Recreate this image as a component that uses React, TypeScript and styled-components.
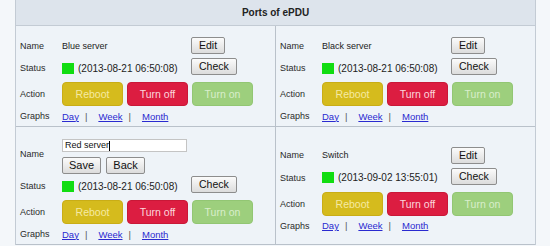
import React from 'react'
import styled, { createGlobalStyle, css } from 'styled-components'

const GlobalStyle = createGlobalStyle`
  body {
    margin: 0;
    background: #f4f7fa;
    font-family: "Liberation Sans", Arial, sans-serif;
  }
`

const Page = styled.div`
  padding-left: 15px;
`

const PortsTable = styled.div`
  width: 521px;
  box-sizing: border-box;
  border-left: 1px solid #c3cbd4;
  border-right: 1px solid #c3cbd4;
  background: #eef3f8;
`

const TableHeading = styled.div`
  height: 26px;
  box-sizing: border-box;
  border-bottom: 1px solid #c3cbd4;
  background: #dde4ec;
  color: #222;
  font-size: 10px;
  font-weight: bold;
  line-height: 25px;
  text-align: center;
`

const PortGrid = styled.div`
  display: grid;
  grid-template-columns: 260px 259px;
`

const PortCell = styled.div<{ $divider: boolean }>`
  display: flex;
  flex-direction: column;
  justify-content: center;
  padding: 11px 0 3px 4px;
  border-bottom: 1px solid #b9c1ca;
  ${(p) => p.$divider && css`border-right: 1px solid #b9c1ca;`}
`

const Row = styled.div<{ $h: number; $mt?: number }>`
  display: flex;
  align-items: center;
  height: ${(p) => p.$h}px;
  margin-top: ${(p) => p.$mt || 0}px;
`

const Label = styled.div<{ $lift?: number }>`
  width: 42px;
  flex: none;
  font-size: 9px;
  color: #2a2a2a;
  margin-bottom: ${(p) => p.$lift || 0}px;
`

const Value = styled.div`
  width: 129px;
  flex: none;
  display: flex;
  align-items: center;
  font-size: 9px;
  color: #222;
`

const EditValue = styled.div`
  width: 129px;
  flex: none;
  display: flex;
  flex-direction: column;
  align-self: flex-start;
`

const Side = styled.div`
  flex: 1;
  align-self: flex-start;
  display: flex;
`

const GrayButton = styled.button<{ $big?: boolean }>`
  height: 17px;
  box-sizing: border-box;
  padding: 0 ${(p) => (p.$big ? 6 : 7)}px;
  margin: 0 ${(p) => (p.$big ? 5 : 0)}px 0 0;
  border: 1px solid #8d8d8d;
  border-radius: 2px;
  background: linear-gradient(#fbfbfb, #dcdcdc);
  color: #111;
  font-family: "Liberation Sans", Arial, sans-serif;
  font-size: ${(p) => (p.$big ? 11 : 10.5)}px;
  line-height: 15px;
  min-width: ${(p) => (p.$big ? 39 : 0)}px;
`

const FakeInput = styled.div`
  width: 119px;
  height: 11px;
  margin-top: 1px;
  box-sizing: content-box;
  border: 1px solid #c4c4c4;
  background: #fff;
  padding: 0 2px;
  font-size: 9px;
  line-height: 11px;
  color: #111;
  display: flex;
  align-items: center;
`

const Caret = styled.span`
  width: 1px;
  height: 10px;
  background: #000;
`

const ButtonPair = styled.div`
  display: flex;
  margin-top: 5px;
`

const StatusLight = styled.span`
  width: 12px;
  height: 11px;
  margin-right: 4px;
  background: #11dd11;
`

const Timestamp = styled.span`
  font-size: 10px;
  color: #222;
  white-space: nowrap;
`

const ActionGroup = styled.div`
  display: flex;
  gap: 4px;
`

const variants = {
  reboot: { bg: '#d5bb1d', border: '#c9ad16', fg: '#f5eaa2' },
  off: { bg: '#dc1d41', border: '#c91837', fg: '#fbd6dd' },
  on: { bg: '#9dcf7d', border: '#92c673', fg: '#d9eecb' },
}

type Variant = keyof typeof variants

const ActionButton = styled.button<{ $variant: Variant }>`
  width: 61px;
  height: 24px;
  box-sizing: border-box;
  border-radius: 4px;
  border: 1px solid ${(p) => variants[p.$variant].border};
  background: ${(p) => variants[p.$variant].bg};
  color: ${(p) => variants[p.$variant].fg};
  font-family: "Liberation Sans", Arial, sans-serif;
  font-size: 10.5px;
  padding: 0;
`

const GraphLink = styled.a`
  font-size: 9.5px;
  color: #2a2ad0;
  text-decoration: underline;
`

const Sep = styled.span`
  font-size: 9.5px;
  color: #555;
  margin: 0 11px 0 6px;
`

type Port = { name: string; time: string; editing?: boolean }

const ports: Port[] = [
  { name: 'Blue server', time: '2013-08-21 06:50:08' },
  { name: 'Black server', time: '2013-08-21 06:50:08' },
  { name: 'Red server', time: '2013-08-21 06:50:08', editing: true },
  { name: 'Switch', time: '2013-09-02 13:55:01' },
]

const PortPanel = ({ port, divider }: { port: Port; divider: boolean }) => (
  <PortCell $divider={divider}>
    {port.editing ? (
      <Row $h={37}>
        <Label $lift={5}>Name</Label>
        <EditValue>
          <FakeInput>
            {port.name}
            <Caret />
          </FakeInput>
          <ButtonPair>
            <GrayButton $big>Save</GrayButton>
            <GrayButton $big>Back</GrayButton>
          </ButtonPair>
        </EditValue>
      </Row>
    ) : (
      <Row $h={17}>
        <Label>Name</Label>
        <Value>{port.name}</Value>
        <Side>
          <GrayButton>Edit</GrayButton>
        </Side>
      </Row>
    )}

    <Row $h={20} $mt={port.editing ? 1 : 4}>
      <Label>Status</Label>
      <Value>
        <StatusLight />
        <Timestamp>({port.time})</Timestamp>
      </Value>
      <Side>
        <GrayButton>Check</GrayButton>
      </Side>
    </Row>

    <Row $h={24} $mt={4}>
      <Label>Action</Label>
      <ActionGroup>
        <ActionButton $variant="reboot">Reboot</ActionButton>
        <ActionButton $variant="off">Turn off</ActionButton>
        <ActionButton $variant="on">Turn on</ActionButton>
      </ActionGroup>
    </Row>

    <Row $h={14} $mt={3}>
      <Label>Graphs</Label>
      <GraphLink href="#">Day</GraphLink>
      <Sep>|</Sep>
      <GraphLink href="#">Week</GraphLink>
      <Sep>|</Sep>
      <GraphLink href="#">Month</GraphLink>
    </Row>
  </PortCell>
)

const App = () => (
  <Page>
    <GlobalStyle />
    <PortsTable>
      <TableHeading>Ports of ePDU</TableHeading>
      <PortGrid>
        {ports.map((port, i) => (
          <PortPanel key={port.name} port={port} divider={i % 2 === 0} />
        ))}
      </PortGrid>
    </PortsTable>
  </Page>
)

export default App
